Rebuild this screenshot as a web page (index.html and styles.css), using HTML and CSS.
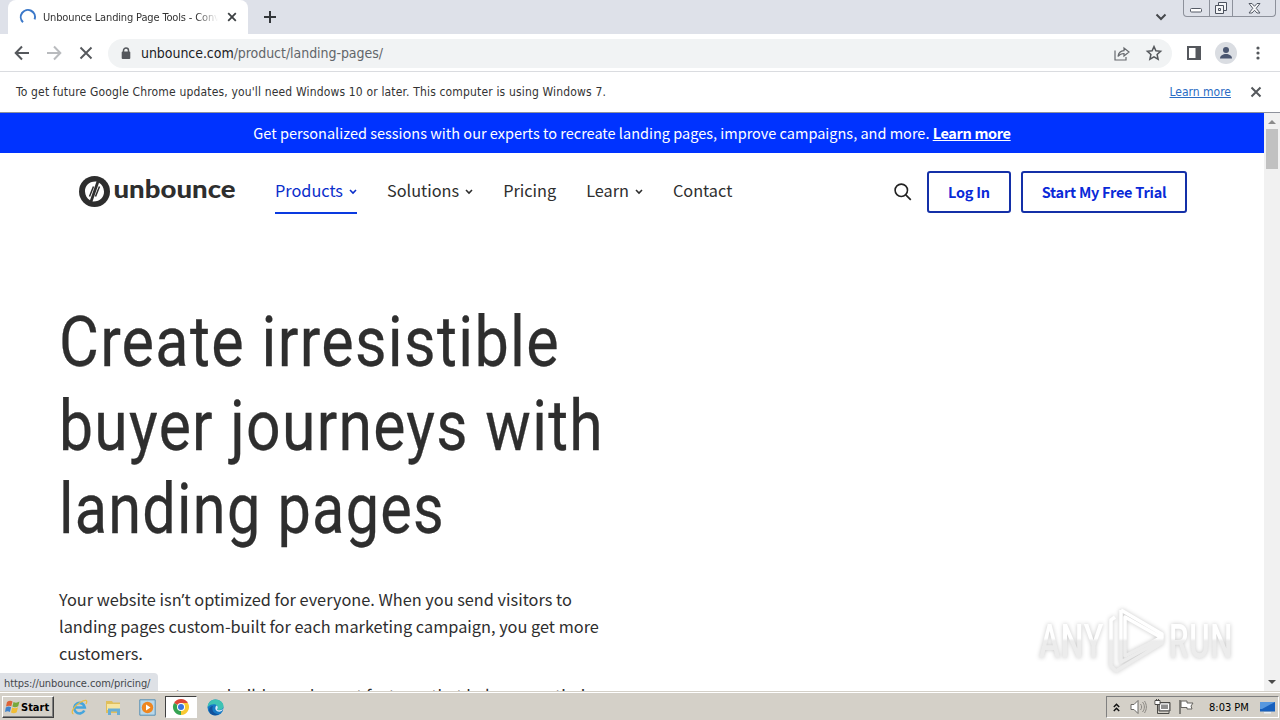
FILE: index.html
```html
<!DOCTYPE html>
<html lang="en">
  <head>
    <meta charset="UTF-8" />
    <title>Unbounce Landing Page Tools</title>
    <link rel="stylesheet" href="styles.css">
  </head>

  <body>
    <div class="tabstrip">
      <div class="tab">
        <svg class="spinner" width="18" height="18" viewBox="0 0 18 18"><path d="M4 14.2A7.1 7.1 0 1 1 15.6 11.4" fill="none" stroke="#3b78c9" stroke-width="2" /></svg>
        <span class="tab-title">Unbounce Landing Page Tools - Conv</span>
        <svg width="10" height="10" viewBox="0 0 10 10"><path d="M1.2 1.2l7.6 7.6M8.8 1.2L1.2 8.8" stroke="#3c4043" stroke-width="1.8" /></svg>
      </div>
      <svg class="new-tab" width="12" height="12" viewBox="0 0 12 12"><path d="M6 0v12M0 6h12" stroke="#33363a" stroke-width="2" /></svg>
      <svg class="tab-search" width="12" height="8" viewBox="0 0 12 8"><path d="M1.5 1.5L6 6l4.500-4.500" fill="none" stroke="#45484c" stroke-width="2" /></svg>
      <div class="window-buttons">
        <span class="min"><svg width="12" height="5" viewBox="0 0 12 5"><rect x=".5" y=".5" width="11" height="3.500" rx="1" fill="#fff" stroke="#555b66" /></svg></span>
        <span class="max"><svg width="14" height="13" viewBox="0 0 14 13"><g fill="#f4f5f7" stroke="#4c525e"><path d="M4.500 .5h8v8h-8z" /><path d="M1.500 3.500h8v8h-8z" /><path d="M4.500 6.500h2v2h-2z" /></g></svg></span>
        <span class="close"><svg width="13" height="11" viewBox="0 0 13 11"><path d="M1 .5h3l2.500 2.800L9 .5h3L8.200 5.300l3.800 4.700H9L6.500 7.300 4 10H1l3.800-4.700z" fill="#f7f7f9" stroke="#555b66" /></svg></span>
      </div>
    </div>

    <div class="toolbar">
      <svg width="16" height="16" viewBox="0 0 16 16"><path d="M15 8H2M8 1.500L1.700 8 8 14.500" fill="none" stroke="#55585c" stroke-width="2" /></svg>
      <svg width="16" height="16" viewBox="0 0 16 16"><path d="M1 8h13M8 1.500L14.300 8 8 14.500" fill="none" stroke="#b9bbbe" stroke-width="2" /></svg>
      <svg width="16" height="16" viewBox="0 0 16 16"><path d="M2.500 2.500l11 11M13.500 2.500l-11 11" stroke="#55585c" stroke-width="1.900" /></svg>
      <div class="omnibox">
        <svg width="10" height="13" viewBox="0 0 10 13"><path d="M2.500 5V3.500a2.500 2.500 0 0 1 5 0V5" fill="none" stroke="#55585d" stroke-width="1.500" /><rect x=".7" y="4.500" width="8.600" height="7.500" rx="1" fill="#55585d" /></svg>
        <span class="url"><b>unbounce.com</b>/product/landing-pages/</span>
        <svg class="share" width="16" height="15" viewBox="0 0 16 15"><path d="M1 4.500V14h11v-3M4 10.500C4.500 7 6.500 4.800 10 4.700V2l5 4-5 4V7.500C7.500 7.500 5.500 8.500 4 10.500z" fill="none" stroke="#66696d" stroke-width="1.200" /></svg>
        <svg width="16" height="16" viewBox="0 0 16 16"><path d="M8 1.600l1.900 4.200 4.700.5-3.500 3.200 1 4.700L8 11.800l-4.100 2.400 1-4.700L1.400 6.300l4.700-.5z" fill="none" stroke="#55585c" stroke-width="1.500" /></svg>
      </div>
      <svg class="panel" width="14" height="14" viewBox="0 0 14 14"><path d="M1 1h12v12H1z" fill="#fff" stroke="#55585d" stroke-width="2" /><path d="M8.500 0H14v14H8.500z" fill="#55585d" /></svg>
      <svg class="avatar" width="22" height="22" viewBox="0 0 22 22"><circle cx="11" cy="11" r="11" fill="#dadde2" /><circle cx="11" cy="8" r="3" fill="#4a5670" /><path d="M5 16.500c0-3 3-4.500 6-4.500s6 1.500 6 4.500z" fill="#4a5670" /></svg>
      <svg width="4" height="14" viewBox="0 0 4 14"><g fill="#55585c"><circle cx="2" cy="2" r="1.600" /><circle cx="2" cy="7" r="1.600" /><circle cx="2" cy="12" r="1.600" /></g></svg>
    </div>

    <div class="infobar">
      <span class="info-text">To get future Google Chrome updates, you'll need Windows 10 or later. This computer is using Windows 7.</span>
      <a class="info-link">Learn more</a>
      <svg width="12" height="12" viewBox="0 0 12 12"><path d="M1.500 1.500l9 9M10.500 1.500l-9 9" stroke="#55585c" stroke-width="2" /></svg>
    </div>

    <div class="viewport">
      <div class="page">
        <div class="banner"><span>Get personalized sessions with our experts to recreate landing pages, improve campaigns, and more. <a>Learn more</a></span></div>

        <div class="nav">
          <svg class="logo" width="157" height="32" viewBox="0 0 157 32">
            <circle cx="15.500" cy="15.500" r="15.500" fill="#2e2e2e" />
            <path d="M17.500 5.500C10 5 5.800 10 6 15.500c.2 4 2 7 5 8.700zM13.500 25.500C21 26 25.200 21 25 15.500c-.2-4-2-7-5-8.700z" fill="#fff" />
            <path d="M14.500 10.500L10.500 20.500M20.500 10.500L16.500 20.500" stroke="#2e2e2e" stroke-width="1.500" />
            <text class="wordmark" x="34.500" y="22" textLength="122" lengthAdjust="spacingAndGlyphs">unbounce</text>
          </svg>
          <a class="nav-link active">Products<svg width="8" height="6" viewBox="0 0 8 6"><path d="M1 1l3 3 3-3" /></svg></a>
          <a class="nav-link">Solutions<svg width="8" height="6" viewBox="0 0 8 6"><path d="M1 1l3 3 3-3" /></svg></a>
          <a class="nav-link">Pricing</a>
          <a class="nav-link">Learn<svg width="8" height="6" viewBox="0 0 8 6"><path d="M1 1l3 3 3-3" /></svg></a>
          <a class="nav-link">Contact</a>
          <svg class="search" width="18" height="18" viewBox="0 0 18 18"><circle cx="7.300" cy="7.300" r="6.200" fill="none" stroke="#222" stroke-width="1.600" /><path d="M11.800 11.800l5 5" stroke="#222" stroke-width="1.700" /></svg>
          <a class="btn login">Log In</a>
          <a class="btn trial">Start My Free Trial</a>
        </div>

        <div class="hero">
          <h1>
            <svg width="560" height="252" viewBox="0 0 560 252">
              <text x="0" y="67" textLength="501" lengthAdjust="spacingAndGlyphs">Create irresistible</text>
              <text x="0" y="151" textLength="545" lengthAdjust="spacingAndGlyphs">buyer journeys with</text>
              <text x="0" y="234" textLength="386" lengthAdjust="spacingAndGlyphs">landing pages</text>
            </svg>
          </h1>
          <p>Your website isn<span class="quote">’</span>t optimized for everyone. When you send visitors to<br>landing pages custom-built for each marketing campaign, you get more<br>customers.</p>
          <p>With your easy-to-use builder and smart features that help you optimize</p>
        </div>
      </div>

      <div class="scrollbar">
        <svg width="8" height="4" viewBox="0 0 8 4"><path d="M0 4l4-4 4 4z" fill="#8b8b8b" /></svg>
        <div class="thumb"></div>
        <svg class="down" width="8" height="4" viewBox="0 0 8 4"><path d="M0 0l4 4 4-4z" fill="#4b4b4b" /></svg>
      </div>

      <div class="status">https://unbounce.com/pricing/</div>

      <svg class="watermark" width="200" height="70" viewBox="0 0 200 70">
        <defs>
          <linearGradient id="fade" gradientUnits="userSpaceOnUse" x1="0" y1="0" x2="0" y2="70">
            <stop offset=".46" stop-color="#fff" />
            <stop offset=".5" stop-color="#ececec" />
          </linearGradient>
        </defs>
        <g class="mark">
          <text x="4" y="52" textLength="65" lengthAdjust="spacingAndGlyphs">ANY</text>
          <text x="134" y="52" textLength="64" lengthAdjust="spacingAndGlyphs">RUN</text>
          <g class="play">
            <path d="M86 4l41 24v4L90 11v39l37-19" />
            <path d="M80 11l-4 3v46l5 5 46-28v-3L86 56V4" />
          </g>
        </g>
      </svg>
    </div>

    <div class="taskbar">
      <div class="start">
        <svg width="16" height="16" viewBox="0 0 16 16"><path d="M2 3c2-1.500 4-1.500 5.500-.5L6.300 7.300C4.800 6.300 3 6.500 1 7.500z" fill="#dd6337" /><path d="M8.500 3c2 1 4 .8 6-.5l-1.300 4.700c-2 1.200-4 1.200-5.800.3z" fill="#76a83c" /><path d="M.8 8.500c2-1.300 3.700-1.200 5.300-.3L4.900 13C3.400 12 1.700 12.200 0 13z" fill="#3f83cc" /><path d="M7.200 8.600c2 1 4 .9 5.800-.3l-1.300 4.900c-2 1.300-4 1.200-5.700.2z" fill="#f1bd34" /></svg>
        <span>Start</span>
      </div>
      <div class="apps">
        <span class="app"><svg width="17" height="17" viewBox="0 0 17 17"><path d="M13.300 11.500A5.300 5.300 0 1 1 13.800 8.500H4" fill="none" stroke="#45a5dd" stroke-width="2.600" /><path d="M2.500 15C-1 14 3 7 9 3.500S17 1 15 5" fill="none" stroke="#e9bd45" stroke-width="1.300" /></svg></span>
        <span class="app"><svg width="17" height="17" viewBox="0 0 17 17"><path d="M1 2h6l1 1.500h7V14H1z" fill="#e0bf5c" /><path d="M2 5h13v6H2z" fill="#f7e5a0" /><path d="M3 16V9.500h12V16h-3v-3.500H6V16z" fill="#68aed6" /></svg></span>
        <span class="app"><svg width="17" height="17" viewBox="0 0 17 17"><path d="M.8 .8h15.400v15.400H.8z" fill="#b9d7e9" stroke="#5890b5" /><circle cx="8.500" cy="8.500" r="5.700" fill="#ee8620" /><path d="M7 5.500l4.500 3L7 11.500z" fill="#fff" /></svg></span>
        <span class="app current"><svg width="16" height="16" viewBox="0 0 16 16"><path d="M8 8L1.070 4A8 8 0 0 1 14.930 4z" fill="#de4637" /><path d="M8 8L14.930 4A8 8 0 0 1 8 16z" fill="#f9c932" /><path d="M8 8v8A8 8 0 0 1 1.070 4z" fill="#35a352" /><path d="M8 4h6.930L11.500 10z" fill="#f9c932" /><circle cx="8" cy="8" r="4" fill="#fff" /><circle cx="8" cy="8" r="3" fill="#3974e0" /></svg></span>
        <span class="app"><svg width="17" height="17" viewBox="0 0 17 17"><circle cx="8.500" cy="8.500" r="8" fill="#1679c5" /><path d="M.6 8C1 3 4.500 .5 8.500 .5c4.500 0 8 3 8 6.500 0 2.500-2 4-4.500 4-1.500 0-2.300-.6-1.500-1.500C12 6 6 3 .6 8z" fill="#3ec3b4" /><path d="M10.500 9.500c-1 1 0 1.800 1.500 1.800 1.500 0 2.700-.4 4-1.300-1 3.500-6 3.500-7.300.8-.7-1.500-.3-3.500.8-4.300 1.300.7 1.600 2 1 3z" fill="#dceefa" /><path d="M6 7c-2 4 1 8.300 6 8.300C8 17.500 2.500 16 2 11c0-2 2-4 4-4z" fill="#12529c" /></svg></span>
      </div>
      <div class="tray">
        <svg class="chev" width="7" height="9" viewBox="0 0 7 9"><path d="M.8 4l2.700-2.700L6.200 4M.8 8l2.700-2.700L6.200 8" fill="none" stroke="#111" stroke-width="1.500" /></svg>
        <svg width="17" height="16" viewBox="0 0 17 16"><path d="M1 5.500h3l4-4v13l-4-4H1z" fill="#fff" stroke="#6c6a66" /><path d="M10.500 5c1.500 2 1.500 4 0 6M12.500 3c2.500 3 2.500 7 0 10M14.500 2c2.500 4 2.500 8 0 12" fill="none" stroke="#8b8883" /></svg>
        <svg width="17" height="16" viewBox="0 0 17 16"><path d="M5 3.500h11v8.500H5z" fill="#a9a9a9" stroke="#4a4946" /><path d="M6.500 5h8v5.500h-8z" fill="#8e8e8e" stroke="#fff" /><path d="M1 1.500h5v4H1zM2.500 0v2M4.500 0v2M3.500 5.500v9H15v-2" fill="none" stroke="#4a4946" /><path d="M1.500 2h4v3h-4z" fill="#fff" /></svg>
        <svg width="17" height="16" viewBox="0 0 17 16"><path d="M2 1v14" stroke="#65635f" stroke-width="1.500" /><path d="M3 2h6v2h6l-2 3 1 3H9V8.500H3z" fill="#fff" stroke="#65635f" /></svg>
        <span class="clock">8:03 PM</span>
        <svg width="15" height="13" viewBox="0 0 15 13"><path d="M0 1h15v9.500H0z" fill="#1760bd" /><path d="M0 1h15L2 8H0z" fill="#5798df" /><path d="M4 11h7v1.500H4z" fill="#e9eef5" /></svg>
      </div>
    </div>
  </body>
</html>
```
FILE: styles.css
```css
* {
  box-sizing: border-box;
}

body {
  margin: 0;
  width: 1280px;
  height: 720px;
  overflow: hidden;
  display: flex;
  flex-direction: column;
  background: #fff;
  font-family: "DejaVu Sans Condensed", "DejaVu Sans", sans-serif;
  font-size: 12px;
  color: #333;
}

svg {
  display: block;
  flex: none;
  overflow: visible;
}

/* browser chrome */
.tabstrip {
  display: flex;
  height: 34px;
  padding-left: 8px;
  background: #dee1e9;
}

.tab {
  display: flex;
  align-items: center;
  width: 240px;
  padding: 0 11px;
  background: #fff;
  border-radius: 8px 8px 0 0;
}

.tab-title {
  width: 175px;
  margin: 0 9px 0 6px;
  font-size: 11px;
  letter-spacing: -0.15px;
  white-space: nowrap;
  overflow: hidden;
  -webkit-mask-image: linear-gradient(to right, #000 88%, transparent);
}

.new-tab {
  margin: 11px 0 0 16px;
}

.tab-search {
  margin: 13px 16px 0 auto;
}

.window-buttons {
  display: flex;
  width: 93px;
  height: 17px;
  margin-right: 4px;
  border: 1px solid #8d919b;
  border-top: 0;
  border-radius: 0 0 4px 4px;
}

.window-buttons span {
  display: flex;
  align-items: center;
  justify-content: center;
}

.min {
  width: 25px;
  padding-top: 4px;
}

.max {
  width: 25px;
  border: solid #8d919b;
  border-width: 0 1px;
}

.close {
  width: 42px;
}

.toolbar {
  display: flex;
  align-items: center;
  height: 38px;
  padding: 1px 20px 0 14px;
  border-bottom: 1px solid #dadce0;
}

.toolbar > svg {
  margin-right: 16px;
}

.toolbar > .panel {
  margin: 0 14px 0 15px;
}

.toolbar > .avatar {
  margin-right: 19px;
}

.toolbar > svg:last-child {
  margin-right: 0;
}

.omnibox {
  display: flex;
  align-items: center;
  flex: 1;
  height: 29px;
  margin-left: -2px;
  padding: 0 10px 0 13px;
  border-radius: 15px;
  background: #f1f3f4;
}

.url {
  margin-left: 10px;
  font-size: 14px;
  letter-spacing: -0.05px;
  color: #62666a;
}

.url b {
  font-weight: normal;
  color: #202124;
}

.share {
  margin: 0 16px 0 auto;
}

.infobar {
  display: flex;
  align-items: center;
  height: 41px;
  padding: 0 18px 1px 16px;
  border-bottom: 1px solid #8e929c;
}

.info-text {
  letter-spacing: 0.16px;
}

.info-link {
  margin: 0 19px 0 auto;
  color: #2a6cc4;
  text-decoration: underline;
}

/* page */
.viewport {
  position: relative;
  display: flex;
  height: 578px;
  overflow: hidden;
}

.page {
  width: 1264px;
  font-family: "Noto Sans CJK SC", "Noto Sans", sans-serif;
  color: #2e2e2e;
}

.banner {
  display: flex;
  align-items: center;
  justify-content: center;
  height: 40px;
  padding-bottom: 2px;
  background: #0033ff;
  color: #fff;
  font-size: 14.5px;
  white-space: nowrap;
}

.banner a {
  font-weight: bold;
  letter-spacing: -0.35px;
  text-decoration: underline;
}

.nav {
  display: flex;
  align-items: center;
  height: 78px;
  padding: 0 77px 0 79px;
}

.logo {
  margin-right: 39px;
}

.wordmark {
  font: 900 25px "Lato", sans-serif;
  fill: #2e2e2e;
}

.nav-link {
  display: flex;
  align-items: center;
  height: 44px;
  margin-right: 30px;
  padding-bottom: 3px;
  border-bottom: 2px solid transparent;
  font-size: 16.3px;
}

.nav-link svg {
  margin: 5px 0 0 6px;
  fill: none;
  stroke: currentColor;
  stroke-width: 1.6;
}

.nav-link.active {
  color: #0a2ecb;
  border-color: #0a3ae0;
}

.search {
  margin: 0 15px 0 auto;
}

.btn {
  display: flex;
  align-items: center;
  justify-content: center;
  height: 42px;
  padding-bottom: 1px;
  border: 2px solid #1430a8;
  border-radius: 3px;
  color: #0a2ad8;
  font-size: 14.5px;
  font-weight: bold;
  letter-spacing: -0.25px;
}

.login {
  width: 84px;
  margin-right: 10px;
}

.trial {
  width: 166px;
}

.hero {
  padding: 68px 0 0 59px;
}

h1 {
  margin: 0 0 34.5px;
  font: 70px "Roboto", sans-serif;
  letter-spacing: 1.5px;
}

h1 text {
  fill: #2e2e2e;
  stroke: #2e2e2e;
  stroke-width: 0.3px;
}

.hero p {
  margin: 0 0 15px;
  font-size: 16.32px;
  line-height: 27px;
  white-space: nowrap;
}

.quote {
  font-family: "Noto Sans", sans-serif;
  line-height: 1;
}

.scrollbar {
  display: flex;
  flex-direction: column;
  align-items: center;
  width: 16px;
  padding: 7px 0;
  background: #f1f1f1;
}

.thumb {
  width: 12px;
  height: 40px;
  margin-top: 5px;
  background: #c1c1c1;
}

.down {
  margin-top: auto;
}

.status {
  position: absolute;
  left: 0;
  bottom: 0;
  width: 158px;
  height: 18px;
  padding: 3px 4px;
  border-radius: 0 4px 0 0;
  background: #dee1e6;
  font-size: 11px;
  line-height: 15px;
  letter-spacing: -0.1px;
  color: #45484c;
}

.watermark {
  position: absolute;
  left: 1035px;
  top: 493px;
  filter: drop-shadow(0 0 2px rgba(0, 0, 0, 0.22));
}

.mark {
  font: 500 49px "Roboto", sans-serif;
  letter-spacing: 1px;
  fill: url(#fade);
}

.play path {
  fill: none;
  stroke: url(#fade);
  stroke-width: 3.5;
  stroke-linejoin: round;
}

/* taskbar */
.taskbar {
  display: flex;
  align-items: center;
  height: 29px;
  padding-top: 2px;
  border-top: 1px solid #d4d0c8;
  box-shadow: inset 0 1px #fff;
  background: #d4d0c8;
}

.start {
  display: flex;
  align-items: center;
  width: 52px;
  height: 22px;
  margin-left: 2px;
  padding-left: 2px;
  border: 1px solid;
  border-color: #fff #404040 #404040 #fff;
  box-shadow: inset -1px -1px #808080;
  font-weight: bold;
  font-size: 11px;
  color: #000;
}

.apps {
  display: flex;
  margin-left: 9px;
}

.app {
  display: flex;
  align-items: center;
  justify-content: center;
  width: 32px;
  height: 22px;
  margin-right: 2px;
}

.current {
  border: 1px solid;
  border-color: #404040 #fff #fff #404040;
  background: #fff;
}

.tray {
  display: flex;
  align-items: center;
  width: 173px;
  height: 22px;
  margin: 0 1px 0 auto;
  padding-left: 6px;
  border: 1px solid;
  border-color: #808080 #fff #fff #808080;
}

.tray svg {
  margin-right: 7px;
}

.tray .chev {
  margin-right: 10px;
}

.clock {
  margin: 0 11px 0 7px;
  font-size: 11px;
  color: #000;
  white-space: nowrap;
}
```
